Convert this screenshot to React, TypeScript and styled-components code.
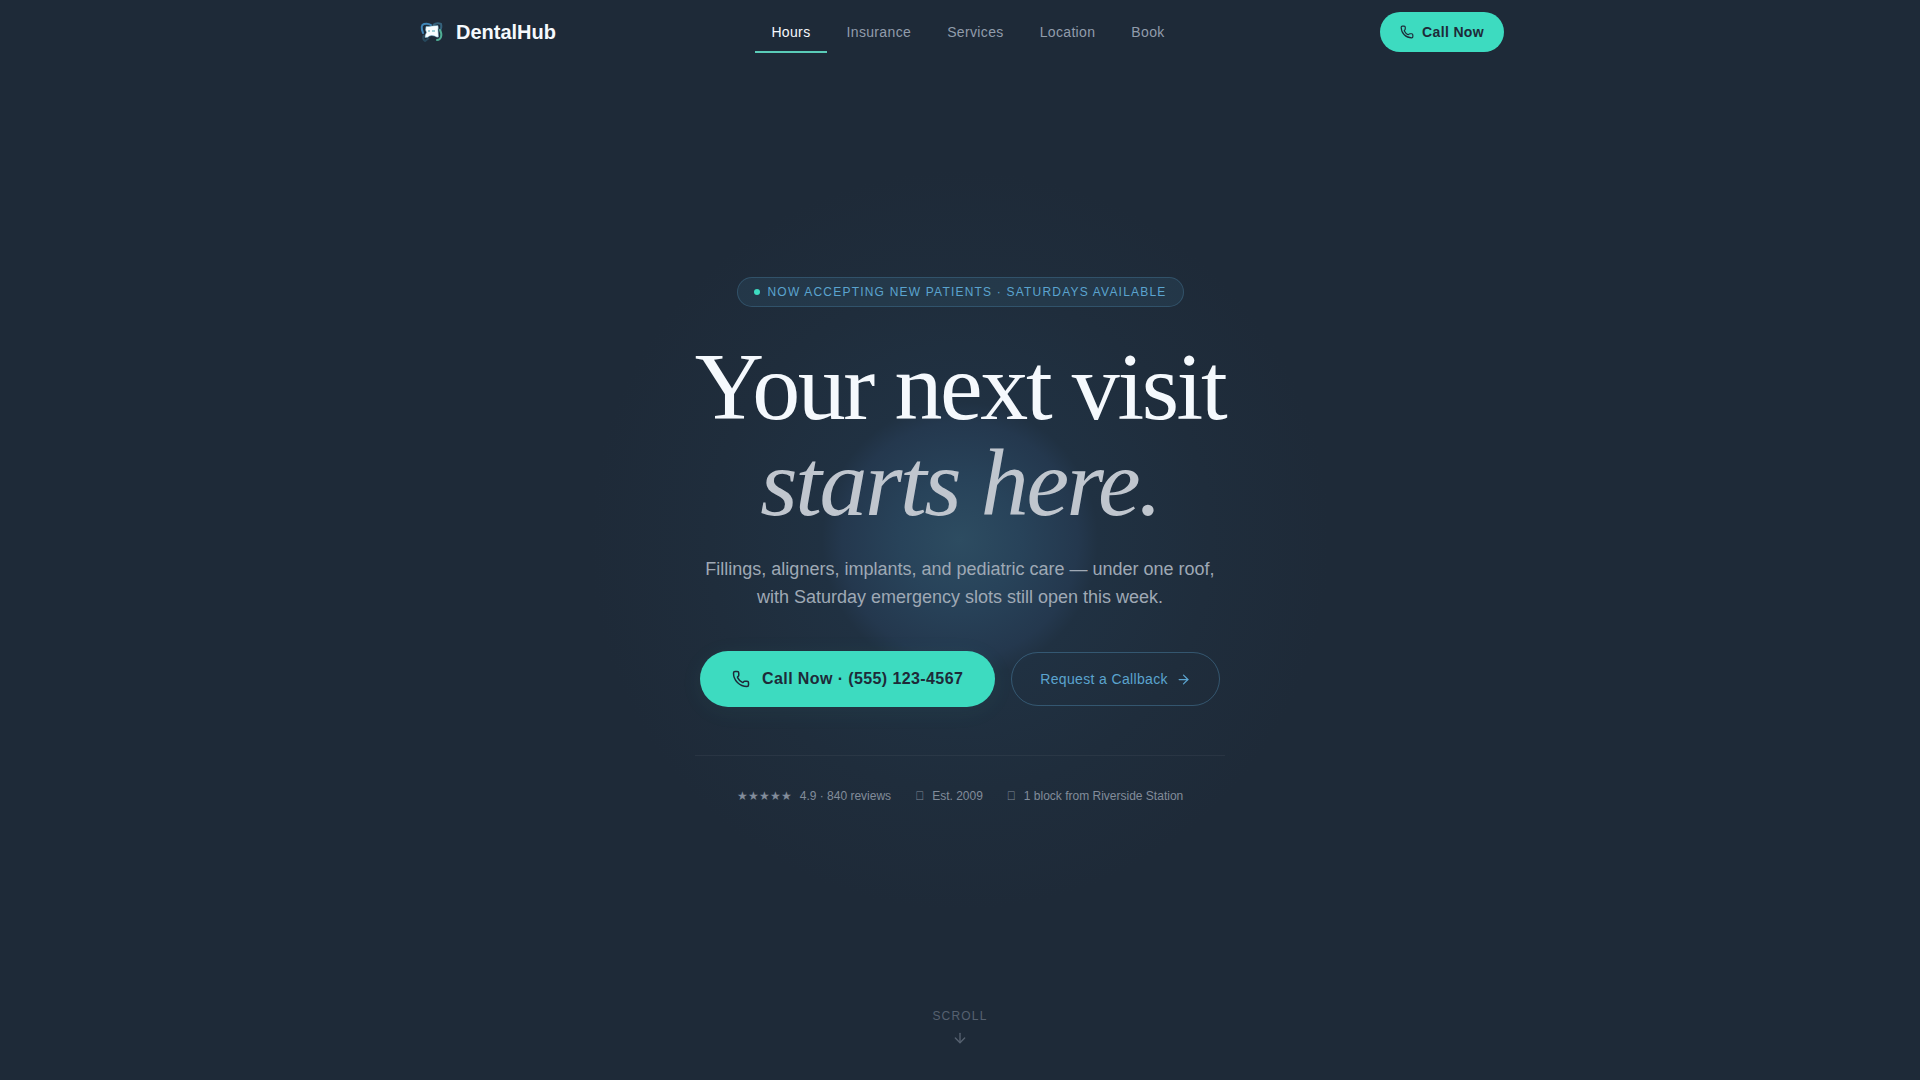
import React from "react";
import styled, { createGlobalStyle } from "styled-components";
import { ArrowDown, ArrowRight, Phone } from "lucide-react";

const GlobalStyle = createGlobalStyle`
  *, *::before, *::after { box-sizing: border-box; }
  body {
    margin: 0;
    background: #1e2a38;
    color: #f5f9fd;
    font-family: "Liberation Sans", Arial, sans-serif;
  }
`;

const Page = styled.div`
  display: flex;
  flex-direction: column;
  min-height: 100vh;
`;

const Header = styled.header`
  padding: 0 24px;
`;

const HeaderInner = styled.div`
  display: flex;
  align-items: center;
  justify-content: space-between;
  max-width: 1088px;
  height: 64px;
  margin: 0 auto;
`;

const Brand = styled.a`
  display: flex;
  align-items: center;
  gap: 8px;
  color: #f5f9fd;
  font-size: 20px;
  font-weight: 700;
  text-decoration: none;
`;

const Nav = styled.nav`
  display: flex;
  gap: 4px;
`;

const NavLink = styled.a<{ $active?: boolean }>`
  padding: 13px 16px;
  box-shadow: inset 0 -2px ${(p) => (p.$active ? "#5accb8" : "transparent")};
  color: ${(p) => (p.$active ? "#f5f9fd" : "#919cab")};
  font-size: 14px;
  line-height: 16px;
  letter-spacing: 0.025em;
  text-decoration: none;
`;

const CallLink = styled.a<{ $large?: boolean }>`
  display: inline-flex;
  align-items: center;
  gap: ${(p) => (p.$large ? 12 : 8)}px;
  height: ${(p) => (p.$large ? 56 : 40)}px;
  padding: 0 ${(p) => (p.$large ? 32 : 20)}px;
  border-radius: 28px;
  background: #3ddbc0;
  box-shadow: ${(p) => (p.$large ? "0 4px 24px rgba(61, 219, 192, 0.06)" : "none")};
  color: #1e2a38;
  font-size: ${(p) => (p.$large ? 16 : 14)}px;
  font-weight: 700;
  letter-spacing: 0.025em;
  text-decoration: none;
`;

const Hero = styled.main`
  display: flex;
  flex: 1;
  flex-direction: column;
  align-items: center;
  padding: 213px 24px 34px;
  background: radial-gradient(
    circle at 50% 476px,
    #2d4c61 0,
    #28435a 60px,
    #24384e 118px,
    #203142 138px,
    #1f2d3c 250px,
    #1e2a38 370px
  );
`;

const Badge = styled.p`
  display: flex;
  align-items: center;
  gap: 8px;
  height: 30px;
  margin: 0 0 32px;
  padding: 0 16px;
  border: 1px solid rgba(91, 164, 207, 0.25);
  border-radius: 15px;
  background: rgba(91, 164, 207, 0.1);
  color: #5ba4cf;
  font-size: 12px;
  letter-spacing: 0.1em;
  text-transform: uppercase;
`;

const Dot = styled.span`
  width: 6px;
  height: 6px;
  border-radius: 50%;
  background: #3ddbc0;
`;

const Content = styled.div`
  display: flex;
  flex-direction: column;
  align-items: center;
`;

const Title = styled.h1`
  margin: 0 0 24px;
  font-family: "Liberation Serif", "Times New Roman", serif;
  font-size: 96px;
  font-weight: 400;
  line-height: 96px;
  letter-spacing: -0.025em;
  text-align: center;

  em {
    display: block;
    color: #c0c6ce;
  }
`;

const Lead = styled.p`
  max-width: 520px;
  margin: 0 0 40px;
  color: #9fa9b5;
  font-size: 18px;
  line-height: 28px;
  text-align: center;
`;

const Actions = styled.div`
  display: flex;
  flex-wrap: wrap;
  justify-content: center;
  align-items: center;
  gap: 16px;
  margin-bottom: 48px;
`;

const CallbackLink = styled.a`
  display: inline-flex;
  align-items: center;
  gap: 8px;
  height: 54px;
  padding: 0 28px;
  border: 1px solid rgba(91, 164, 207, 0.35);
  border-radius: 27px;
  color: #5ba4cf;
  font-size: 14px;
  letter-spacing: 0.025em;
  text-decoration: none;
`;

const Facts = styled.ul`
  display: flex;
  flex-wrap: wrap;
  align-self: stretch;
  justify-content: center;
  gap: 24px;
  margin: 0;
  padding: 32px 0 0;
  border-top: 1px solid rgba(255, 255, 255, 0.05);
  color: #828c9a;
  font-size: 12px;
  line-height: 16px;
  list-style: none;
`;

const Fact = styled.li`
  display: flex;
  gap: 8px;
`;

const ScrollLink = styled.a`
  display: flex;
  flex-direction: column;
  align-items: center;
  gap: 6px;
  margin-top: auto;
  color: #566170;
  font-size: 12px;
  line-height: 16px;
  letter-spacing: 0.1em;
  text-decoration: none;
`;

const BrandMark = () => (
  <svg width="32" height="32" viewBox="0 0 32 32" fill="none" aria-hidden="true">
    <path d="M8 19q-2 4 1 6l4-3" stroke="#27485c" strokeWidth="2" />
    <path d="M7 17Q4 9 8 8q4-1 7 1" stroke="#3f86b8" strokeWidth="2" strokeLinecap="round" />
    <path d="M17 9q4-3 8-1 1 3-1 7" stroke="#35627c" strokeWidth="2" />
    <path d="M24 14q2 4 1 7-1 3-4 3" stroke="#4fae94" strokeWidth="2" strokeLinecap="round" />
    <path
      d="M10 10.500q3 0 6-.5 3-.5 6-.5.500 2 0 4.500l.5 7q-2 .5-4-1-3-1-5 0-2 2-4.500 1.500 0-3 1.500-5-1.500-3-.5-6z"
      fill="#f8fdff"
      stroke="#6fb3cf"
      strokeWidth="0.5"
    />
    <path d="M12 15h2m2 0h3" stroke="#4aa5b0" />
  </svg>
);

const sections = ["Hours", "Insurance", "Services", "Location", "Book"];

const facts = [
  { mark: "★★★★★", text: "4.9 · 840 reviews" },
  { mark: "\uE8F0", text: "Est. 2009" },
  { mark: "\uE8F1", text: "1 block from Riverside Station" },
];

export default function App() {
  return (
    <Page>
      <GlobalStyle />
      <Header>
        <HeaderInner>
          <Brand href="#top">
            <BrandMark />
            DentalHub
          </Brand>
          <Nav aria-label="Main">
            {sections.map((name, i) => (
              <NavLink key={name} href={`#${name.toLowerCase()}`} $active={i === 0}>
                {name}
              </NavLink>
            ))}
          </Nav>
          <CallLink href="tel:+15551234567">
            <Phone size={14} />
            Call Now
          </CallLink>
        </HeaderInner>
      </Header>
      <Hero id="top">
        <Badge>
          <Dot />
          Now accepting new patients · Saturdays available
        </Badge>
        <Content>
          <Title>
            Your next visit <em>starts here.</em>
          </Title>
          <Lead>
            Fillings, aligners, implants, and pediatric care — under one roof, with Saturday
            emergency slots still open this week.
          </Lead>
          <Actions>
            <CallLink href="tel:+15551234567" $large>
              <Phone size={18} />
              Call Now · (555) 123-4567
            </CallLink>
            <CallbackLink href="#book">
              Request a Callback
              <ArrowRight size={15} />
            </CallbackLink>
          </Actions>
          <Facts>
            {facts.map((fact) => (
              <Fact key={fact.text}>
                <span aria-hidden="true">{fact.mark}</span>
                {fact.text}
              </Fact>
            ))}
          </Facts>
        </Content>
        <ScrollLink href="#hours">
          SCROLL
          <ArrowDown size={16} />
        </ScrollLink>
      </Hero>
    </Page>
  );
}
